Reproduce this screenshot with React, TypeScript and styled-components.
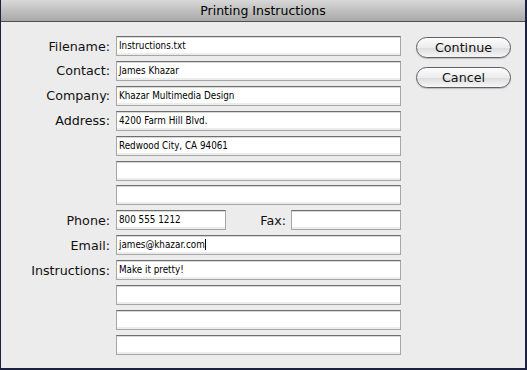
import React, { FC } from "react";
import styled, { createGlobalStyle } from "styled-components";

const GlobalStyle = createGlobalStyle`
  html, body {
    margin: 0;
    padding: 0;
    background: #1c2140;
  }
  body {
    width: 527px;
    height: 370px;
    overflow: hidden;
  }
`;

interface IRow {
  label?: string;
  value?: string;
  caret?: boolean;
}

const rows: IRow[] = [
  { label: "Filename:", value: "Instructions.txt" },
  { label: "Contact:", value: "James Khazar" },
  { label: "Company:", value: "Khazar Multimedia Design" },
  { label: "Address:", value: "4200 Farm Hill Blvd." },
  { value: "Redwood City, CA 94061" },
  {},
  {}
];

const lowerRows: IRow[] = [
  { label: "Email:", value: "james@khazar.com", caret: true },
  { label: "Instructions:", value: "Make it pretty!" },
  {},
  {},
  {}
];

const Field: FC<{ value?: string; caret?: boolean; width?: number }> = ({
  value,
  caret,
  width
}) => (
  <Box width={width}>
    {value}
    {caret && <Caret />}
  </Box>
);

/**
 * Printing Instructions dialog
 */
export default function App() {
  return (
    <>
      <GlobalStyle />
      <Window>
        <TitleBar>Printing Instructions</TitleBar>
        <Body>
          <Form>
            {rows.map((r, i) => (
              <React.Fragment key={i}>
                <Label>{r.label}</Label>
                <Field value={r.value} />
              </React.Fragment>
            ))}
            <Label>Phone:</Label>
            <PhoneRow>
              <Field value="800 555 1212" width={110} />
              <Label>Fax:</Label>
              <Field width={110} />
            </PhoneRow>
            {lowerRows.map((r, i) => (
              <React.Fragment key={"l" + i}>
                <Label>{r.label}</Label>
                <Field value={r.value} caret={r.caret} />
              </React.Fragment>
            ))}
          </Form>
          <Buttons>
            <Button>Continue</Button>
            <Button>Cancel</Button>
          </Buttons>
        </Body>
      </Window>
    </>
  );
}

const Window = styled.div`
  margin-left: 1px;
  width: 524px;
  height: 368px;

  display: flex;
  flex-direction: column;

  background: #ececec;
  font-family: "DejaVu Sans", "Liberation Sans", sans-serif;
  color: #000;
`;

const TitleBar = styled.div`
  height: 21px;
  flex: none;

  display: flex;
  align-items: center;
  justify-content: center;

  background: linear-gradient(#d8d8d8, #a8a8a8);
  border-bottom: 1px solid #4e4e4e;
  font-size: 12.5px;
  color: #000;
`;

const Body = styled.div`
  display: flex;
  align-items: flex-start;
  gap: 15px;
  padding-top: 14px;
`;

const Form = styled.div`
  display: grid;
  grid-template-columns: 109px 285px;
  grid-auto-rows: 20px;
  column-gap: 6px;
  row-gap: 4.92px;
  align-items: center;
`;

const Label = styled.div`
  text-align: right;
  font-size: 12.7px;
  white-space: nowrap;
  color: #111;
`;

const PhoneRow = styled.div`
  display: grid;
  grid-template-columns: 110px auto 110px;
  column-gap: 5px;
  align-items: center;
`;

const Box = styled.div<{ width?: number }>`
  box-sizing: border-box;
  height: 20px;
  width: ${p => (p.width ? p.width + "px" : "100%")};
  padding: 0 2px 1px;

  display: flex;
  align-items: center;

  background: #fff;
  border: 1px solid #a6a6a6;
  border-top-color: #6f6f6f;
  box-shadow: inset 0 1px 0 #d8d8d8, inset 0 -2px 0 #ececec;
  font-family: "DejaVu Sans Condensed", "DejaVu Sans", sans-serif;
  font-size: 9.8px;
  white-space: nowrap;
  overflow: hidden;
`;

const Caret = styled.span`
  width: 1px;
  height: 11px;
  background: #000;
`;

const Buttons = styled.div`
  display: flex;
  flex-direction: column;
  gap: 9px;
  padding-top: 1px;
`;

const Button = styled.div`
  box-sizing: border-box;
  width: 95px;
  height: 21px;

  display: flex;
  align-items: center;
  justify-content: center;

  border: 1px solid #5f5f6a;
  border-radius: 11px;
  background: linear-gradient(#fdfdfd, #ececec 50%, #dcdcdc 51%, #f6f6f6);
  box-shadow: 0 1px 1px rgba(0, 0, 0, 0.2);
  font-size: 12.7px;
  color: #111;
`;
